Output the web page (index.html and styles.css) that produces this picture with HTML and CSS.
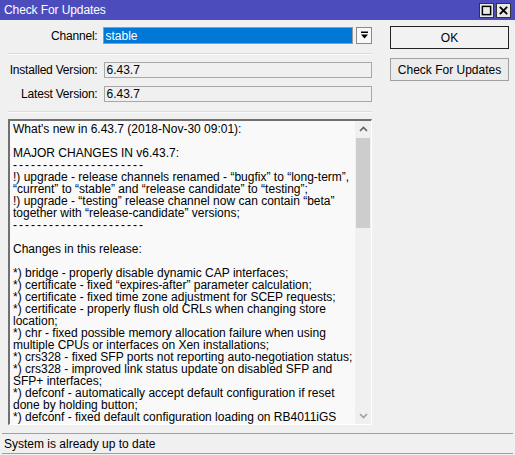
FILE: index.html
```html
<!DOCTYPE html>
<html>
<head>
<meta charset="utf-8">
<link rel="stylesheet" href="styles.css">
</head>
<body>
<div class="window">
  <div class="titlebar">
    <span class="title">Check For Updates</span>
    <div class="tbtns">
      <span class="tbtn"><svg width="12" height="12" viewBox="0 0 12 12"><rect x="1.5" y="1.5" width="9" height="9" fill="none" stroke="#000" stroke-width="1.6"/></svg></span>
      <span class="tbtn"><svg width="12" height="12" viewBox="0 0 12 12"><path d="M2 2 L10 10 M10 2 L2 10" stroke="#000" stroke-width="2"/></svg></span>
    </div>
  </div>
  <div class="body">
    <div class="left">
      <div class="row r-channel">
        <label class="lbl">Channel:</label>
        <div class="select"><span class="sel-val">stable</span></div>
        <span class="drop"><svg width="9" height="9" viewBox="0 0 9 9"><rect x="1" y="0.5" width="7" height="1.5" fill="#000"/><path d="M1 3.5 H8 L4.5 7.5 Z" fill="#000"/></svg></span>
      </div>
      <div class="sep sep1"></div>
      <div class="row r-inst">
        <label class="lbl">Installed Version:</label>
        <div class="field">6.43.7</div>
      </div>
      <div class="row r-latest">
        <label class="lbl">Latest Version:</label>
        <div class="field">6.43.7</div>
      </div>
      <div class="sep sep2"></div>
      <div class="textbox">
        <div class="text">What's new in 6.43.7 (2018-Nov-30 09:01):<br>
<br>
MAJOR CHANGES IN v6.43.7:<br>
<span class="dash">----------------------</span><br>
!) upgrade - release channels renamed - “bugfix” to “long-term”,<br>
“current” to “stable” and “release candidate” to “testing”;<br>
!) upgrade - “testing” release channel now can contain “beta”<br>
together with “release-candidate” versions;<br>
<span class="dash">----------------------</span><br>
<br>
Changes in this release:<br>
<br>
*) bridge - properly disable dynamic CAP interfaces;<br>
*) certificate - fixed “expires-after” parameter calculation;<br>
*) certificate - fixed time zone adjustment for SCEP requests;<br>
*) certificate - properly flush old CRLs when changing store<br>
location;<br>
*) chr - fixed possible memory allocation failure when using<br>
multiple CPUs or interfaces on Xen installations;<br>
*) crs328 - fixed SFP ports not reporting auto-negotiation status;<br>
*) crs328 - improved link status update on disabled SFP and<br>
SFP+ interfaces;<br>
*) defconf - automatically accept default configuration if reset<br>
done by holding button;<br>
*) defconf - fixed default configuration loading on RB4011iGS</div>
        <div class="scroll">
          <span class="arr"><svg width="9" height="6" viewBox="0 0 9 6"><path d="M1 5 L4.5 1.5 L8 5" fill="none" stroke="#606060" stroke-width="1.6"/></svg></span>
          <div class="track"><div class="thumb"></div></div>
          <span class="arr"><svg width="9" height="6" viewBox="0 0 9 6"><path d="M1 1 L4.5 4.5 L8 1" fill="none" stroke="#a0a0a0" stroke-width="1.6"/></svg></span>
        </div>
      </div>
    </div>
    <div class="right">
      <button class="btn btn-ok">OK</button>
      <button class="btn btn-check">Check For Updates</button>
    </div>
  </div>
  <div class="status">System is already up to date</div>
</div>
</body>
</html>
```
FILE: styles.css
```css
html, body {
  margin: 0;
  padding: 0;
  background: #f0f0f0;
}
.window {
  width: 515px;
  height: 455px;
  font-family: "Liberation Sans", Arial, sans-serif;
  font-size: 12px;
  color: #000;
  display: flex;
  flex-direction: column;
}
.titlebar {
  height: 20px;
  background: #4c4cbd;
  display: flex;
  align-items: center;
  justify-content: space-between;
  padding: 0 4px 0 4px;
}
.title {
  color: #fff;
  font-size: 12px;
  letter-spacing: -0.1px;
}
.tbtns {
  display: flex;
  gap: 2px;
}
.tbtn {
  width: 13px;
  height: 13px;
  background: #e8e8e8;
  border: 1px solid #333;
  display: flex;
  align-items: center;
  justify-content: center;
}
.tbtn svg {
  width: 11px;
  height: 11px;
}
.body {
  display: flex;
  height: 413px;
}
.left {
  width: 364px;
  padding-left: 8px;
  display: flex;
  flex-direction: column;
}
.row {
  display: flex;
  align-items: center;
}
.lbl {
  width: 90px;
  text-align: right;
  margin-right: 6px;
  white-space: nowrap;
  display: flex;
  justify-content: flex-end;
  letter-spacing: -0.2px;
}
.r-channel {
  margin-top: 7px;
  height: 17px;
}
.select {
  width: 249px;
  height: 15px;
  background: #0078d7;
  border: 1px solid #9a9a9a;
  color: #fff;
  display: flex;
  align-items: center;
}
.sel-val {
  padding-left: 1px;
}
.drop {
  margin-left: 3px;
  width: 14px;
  height: 15px;
  border: 1px solid #8a8a8a;
  background: #f8f8f8;
  display: flex;
  align-items: center;
  justify-content: center;
}
.sep {
  height: 1px;
  background: #dcdcdc;
  border-bottom: 1px solid #fafafa;
}
.sep1 { margin-top: 9px; }
.sep2 { margin-top: 9px; }
.field {
  width: 266px;
  height: 14px;
  border: 1px solid #a8a8a8;
  padding-left: 2px;
  display: flex;
  align-items: center;
}
.r-inst { margin-top: 7px; height: 16px; }
.r-latest { margin-top: 8px; height: 16px; }
.textbox {
  margin-top: 6px;
  height: 303px;
  border-top: 2px solid #707070;
  border-left: 2px solid #707070;
  border-right: 1px solid #ffffff;
  border-bottom: 1px solid #ffffff;
  background: #f9f9f9;
  display: flex;
}
.text {
  flex: 1;
  padding: 2px 0 0 3px;
  line-height: 12px;
  white-space: nowrap;
  overflow: hidden;
}
.dash {
  letter-spacing: 2px;
}
.scroll {
  width: 16px;
  display: flex;
  flex-direction: column;
  background: #f0f0f0;
}
.arr {
  height: 16px;
  display: flex;
  align-items: center;
  justify-content: center;
}
.track {
  flex: 1;
}
.thumb {
  margin: 1px 1px 0 1px;
  height: 90px;
  background: #cdcdcd;
}
.right {
  padding-left: 18px;
  display: flex;
  flex-direction: column;
}
.btn {
  width: 119px;
  height: 23px;
  font-family: "Liberation Sans", Arial, sans-serif;
  font-size: 12px;
  color: #000;
  padding: 0;
}
.btn-ok {
  margin-top: 6px;
  border: 1px solid #222;
  background: #f2f2f2;
}
.btn-check {
  margin-top: 9px;
  border: 1px solid #a0a0a0;
  background: #ececec;
}
.status {
  margin: 0 2px 0 2px;
  height: 19px;
  border-top: 1px solid #a0a0a0;
  border-bottom: 1px solid #a0a0a0;
  display: flex;
  align-items: center;
  padding-left: 2px;
}
```
